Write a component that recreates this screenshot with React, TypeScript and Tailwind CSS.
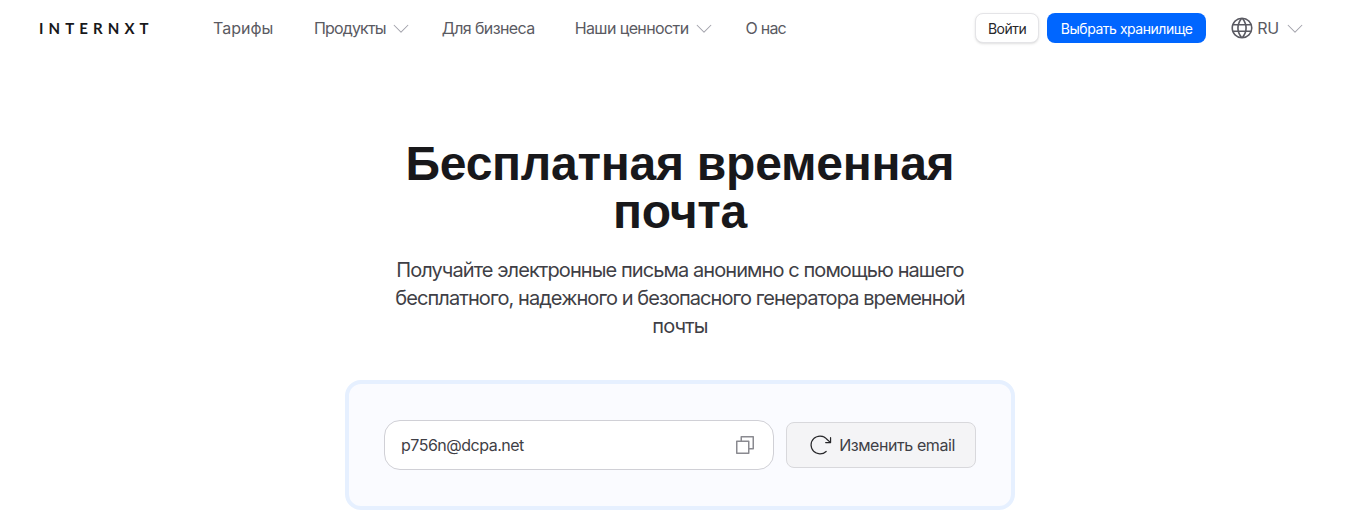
import { PiArrowClockwiseLight, PiCaretDownLight, PiCopy, PiGlobe } from "react-icons/pi";

const navItems = [
  { label: "Тарифы", caret: false, cls: "w-[61px] tracking-[0px]" },
  { label: "Продукты", caret: true, cls: "-mr-[10px] tracking-[-0.85px]" },
  { label: "Для бизнеса", caret: false, cls: "tracking-[-0.6px]" },
  { label: "Наши ценности", caret: true, cls: "-mr-[9px] tracking-[-0.6px]" },
  { label: "О нас", caret: false, cls: "tracking-[-0.8px]" },
];

function Header() {
  return (
    <header className="flex h-[56px] items-center pl-[39px] pr-[45px] font-['Inter',sans-serif]">
      <span className="w-[174px] font-['Lato',sans-serif] text-[15px] font-bold tracking-[0.34em] text-[#18181b]">
        INTERNXT
      </span>
      <nav className="flex items-center gap-[40px]">
        {navItems.map((item) => (
          <a key={item.label} className={`flex items-center gap-[4px] text-[16px] text-[#5a5a62] ${item.cls}`}>
            {item.label}
            {item.caret && <PiCaretDownLight className="text-[#a1a1aa]" size={22} />}
          </a>
        ))}
      </nav>
      <div className="ml-auto flex items-center gap-[8px]">
        <button className="h-[30px] w-[64px] rounded-lg border border-[#e4e4e7] bg-white text-[14px] tracking-[-0.47px] text-[#27272a] shadow-sm">
          Войти
        </button>
        <button className="h-[30px] w-[159px] rounded-lg bg-[#0066ff] text-[14px] tracking-[-0.47px] text-white">
          Выбрать хранилище
        </button>
        <div className="ml-[15px] flex items-center gap-[2px] text-[16px] tracking-[-0.2px] text-[#5a5a62]">
          <PiGlobe size={26} />
          RU
          <PiCaretDownLight className="ml-[3px] text-[#a1a1aa]" size={22} />
        </div>
      </div>
    </header>
  );
}

export default function App() {
  return (
    <div className="h-[530px] overflow-hidden bg-white font-['Inter',sans-serif]">
      <Header />
      <main className="flex flex-col items-center pt-[84px] pl-[9px]">
        <h1 className="w-[620px] text-center font-['Liberation_Sans',sans-serif] text-[48px] leading-[48px] font-bold tracking-[-0.25px] text-[#18181b]">
          Бесплатная временная почта
        </h1>
        <p className="mt-[20px] w-[600px] text-center text-[20px] leading-[28px] tracking-[-0.92px] text-[#3f3f46]">
          Получайте электронные письма анонимно с помощью нашего бесплатного, надежного и безопасного генератора временной почты
        </p>
        <section className="mt-[40px] flex h-[130px] w-[670px] items-center gap-[12px] rounded-2xl border-4 border-[#e6f0ff] bg-[#fafbff] pl-[35px]">
          <div className="flex h-[50px] w-[390px] items-center justify-between rounded-2xl border border-[#d0d0d6] bg-white pr-[16px] pl-[16px]">
            <span className="text-[16px] tracking-[-0.5px] text-[#3f3f46]">p756n@dcpa.net</span>
            <PiCopy className="text-[#8a8a90]" size={24} />
          </div>
          <button className="flex h-[46px] w-[190px] items-center justify-center gap-[6px] rounded-lg border border-[#d8d8dc] bg-[#f4f4f6] text-[16px] tracking-[-0.43px] text-[#3f3f46]">
            <PiArrowClockwiseLight className="text-[#27272a]" size={26} />
            Изменить email
          </button>
        </section>
      </main>
    </div>
  );
}
